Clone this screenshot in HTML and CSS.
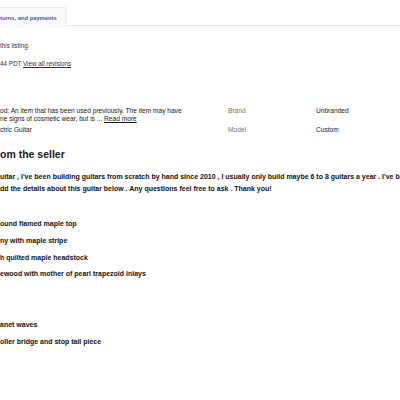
FILE: index.html
```html
<!DOCTYPE html>
<html>
<head>
<meta charset="utf-8">
<link rel="stylesheet" href="styles.css">
</head>
<body>
<div class="tabs">
  <div class="tab">turns, and payments</div>
</div>
<div class="info">
  <p class="note">this listing.</p>
  <p class="rev">44 PDT <a href="#">View all revisions</a></p>
</div>
<div class="specs">
  <div class="col left">
    <div class="cond">od: An item that has been used previously. The item may have<br>ne signs of cosmetic wear, but is ... <a href="#">Read more</a></div>
    <div class="val">ctric Guitar</div>
  </div>
  <div class="col lab">
    <div class="row1">Brand</div>
    <div>Model</div>
  </div>
  <div class="col val2">
    <div class="row1">Unbranded</div>
    <div>Custom</div>
  </div>
</div>
<h2 class="heading">om the seller</h2>
<div class="desc">
  <p class="intro">uitar , I've been building guitars from scratch by hand since 2010 , I usually only build maybe 6 to 8 guitars a year . I've been<br>dd the details about this guitar below . Any questions feel free to ask . Thank you!</p>
  <ul class="feat">
    <li>ound flamed maple top</li>
    <li>ny with maple stripe</li>
    <li>h quilted maple headstock</li>
    <li>ewood with mother of pearl trapezoid inlays</li>
    <li>&nbsp;</li>
    <li>&nbsp;</li>
    <li>anet waves</li>
    <li>oller bridge and stop tail piece</li>
  </ul>
</div>
</body>
</html>
```
FILE: styles.css
```css
html, body {
  margin: 0;
  padding: 0;
  background: #fff;
  font-family: "Liberation Sans", Arial, sans-serif;
  color: #191919;
  overflow: hidden;
}
.tabs {
  height: 25px;
  border-bottom: 1px solid #e5e5e5;
  box-shadow: 0 1px 2px rgba(0,0,0,0.06);
  display: flex;
  align-items: flex-end;
}
.tab {
  width: 66px;
  height: 19px;
  box-sizing: border-box;
  background: #f8f8f8;
  border: 1px solid #ececec;
  border-left: none;
  border-bottom: none;
  color: #3a5bb8;
  font-size: 5.8px;
  font-weight: bold;
  display: flex;
  align-items: center;
  padding-top: 1px;
  margin-bottom: -1px;
}
.info {
  padding-top: 16px;
  font-size: 6.3px;
  color: #333;
}
.info p { margin: 0; }
.note { height: 18px; }
.rev a { color: #333; }
.specs {
  margin-top: 40px;
  display: flex;
  font-size: 6.6px;
  line-height: 8px;
}
.col.left { width: 228px; }
.cond { height: 18px; }
.lab { width: 88px; color: #707070; }
.row1 { height: 19px; }
.val2 { color: #191919; }
.cond a { color: #191919; }
.val { padding-top: 1px; }
.heading {
  margin: 13px 0 0;
  font-size: 10.5px;
  font-weight: bold;
  line-height: 14px;
}
.desc {
  font-family: "Liberation Sans", Arial, sans-serif;
  font-weight: bold;
  font-size: 7px;
  color: #111;
}
.intro {
  margin: 10px 0 0;
  line-height: 12px;
  white-space: nowrap;
}
.feat {
  list-style: none;
  margin: 21px 0 0;
  padding: 0;
}
.feat li {
  line-height: 16.8px;
}
```
